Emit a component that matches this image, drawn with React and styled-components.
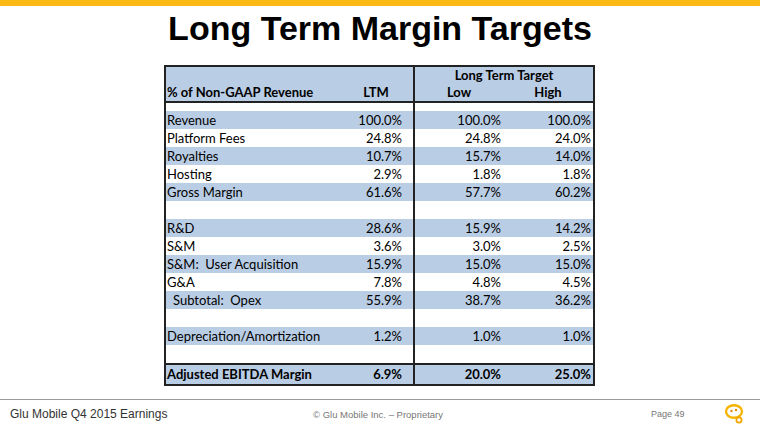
import React from "react";
import styled, { createGlobalStyle } from "styled-components";

const GlobalStyle = createGlobalStyle`
  html, body { margin: 0; padding: 0; background: #fff; }
  body { width: 760px; height: 428px; overflow: hidden; }
  #root { width: 760px; height: 428px; }
`;

const Page = styled.div`
  width: 760px;
  height: 428px;
  display: flex;
  flex-direction: column;
  background: #fff;
`;

const TopBar = styled.div`
  height: 6px;
  background: #fdb913;
  flex: none;
`;

const Title = styled.h1`
  margin: 4px 0 0;
  font-family: "Liberation Sans", Arial, sans-serif;
  font-weight: 700;
  font-size: 34px;
  line-height: 37px;
  text-align: center;
  color: #000;
`;

const Table = styled.div`
  box-sizing: border-box;
  width: 431px;
  margin: 18px 0 0 164px;
  border: 2px solid #222;
  font-family: Lato, "Liberation Sans", sans-serif;
  font-size: 13px;
  color: #000;
`;

const HeaderGrid = styled.div`
  display: grid;
  grid-template-columns: 173px 74px 90px 90px;
  grid-template-rows: 17px 17px;
  background: #b9cde5;
  border-bottom: 2px solid #222;
  font-weight: 700;
`;

const HeadCell = styled.div`
  grid-row: ${(p) => p.$row};
  grid-column: ${(p) => p.$col};
  display: flex;
  align-items: ${(p) => (p.$bottom ? "flex-end" : "center")};
  justify-content: ${(p) => p.$justify || "center"};
  padding-left: ${(p) => p.$pl || 0}px;
  border-left: ${(p) => (p.$divider ? "2px solid #222" : "none")};
  line-height: 17px;
  white-space: pre;
`;

const Row = styled.div`
  display: grid;
  grid-template-columns: 173px 74px 90px 90px;
  height: ${(p) => p.$h || 18}px;
  background: ${(p) => (p.$shade ? "#b9cde5" : "#fff")};
  font-weight: ${(p) => (p.$bold ? 700 : 400)};
  border-top: ${(p) => (p.$topRule ? "2px solid #222" : "none")};
  line-height: ${(p) => p.$h || 18}px;
`;

const Label = styled.div`
  padding-left: ${(p) => (p.$indent ? 7 : 1)}px;
  white-space: pre;
`;

const Value = styled.div`
  box-sizing: border-box;
  text-align: right;
  padding-right: ${(p) => p.$pr}px;
  border-left: ${(p) => (p.$divider ? "2px solid #222" : "none")};
`;

const Footer = styled.div`
  margin-top: auto;
  height: 28px;
  border-top: 1px solid #9a9a9a;
  display: flex;
  align-items: center;
  padding: 0 14px 0 10px;
  font-family: "Liberation Sans", Arial, sans-serif;
`;

const FooterTitle = styled.div`
  font-size: 12px;
  color: #333;
  width: 303px;
`;

const Copyright = styled.div`
  font-size: 9.5px;
  color: #777;
  width: 338px;
`;

const PageNo = styled.div`
  font-size: 9px;
  color: #777;
  flex: 1;
`;

const Logo = () => (
  <svg width="22" height="22" viewBox="0 0 22 22">
    <ellipse cx="10" cy="8.5" rx="8" ry="6.3" fill="none" stroke="#f4b400" strokeWidth="2.4" />
    <circle cx="7.5" cy="8" r="1.2" fill="#e08a00" />
    <circle cx="12" cy="7" r="1.2" fill="#e08a00" />
    <circle cx="15" cy="17" r="2.6" fill="none" stroke="#f0a800" strokeWidth="1.8" />
  </svg>
);

const rows = [
  { label: "Revenue", v: ["100.0%", "100.0%", "100.0%"], shade: true },
  { label: "Platform Fees", v: ["24.8%", "24.8%", "24.0%"] },
  { label: "Royalties", v: ["10.7%", "15.7%", "14.0%"], shade: true },
  { label: "Hosting", v: ["2.9%", "1.8%", "1.8%"] },
  { label: "Gross Margin", v: ["61.6%", "57.7%", "60.2%"], shade: true },
  { blank: true },
  { label: "R&D", v: ["28.6%", "15.9%", "14.2%"], shade: true },
  { label: "S&M", v: ["3.6%", "3.0%", "2.5%"] },
  { label: "S&M:  User Acquisition", v: ["15.9%", "15.0%", "15.0%"], shade: true },
  { label: "G&A", v: ["7.8%", "4.8%", "4.5%"] },
  { label: "Subtotal:  Opex", v: ["55.9%", "38.7%", "36.2%"], shade: true, indent: true },
  { blank: true },
  { label: "Depreciation/Amortization", v: ["1.2%", "1.0%", "1.0%"], shade: true },
  { blank: true },
  { label: "Adjusted EBITDA Margin", v: ["6.9%", "20.0%", "25.0%"], shade: true, bold: true, topRule: true, h: 19 },
];

const DataRow = ({ r }) => (
  <Row $shade={r.shade} $bold={r.bold} $topRule={r.topRule} $h={r.h}>
    <Label $indent={r.indent}>{r.label || ""}</Label>
    <Value $pr={11}>{r.v ? r.v[0] : ""}</Value>
    <Value $pr={2} $divider>{r.v ? r.v[1] : ""}</Value>
    <Value $pr={2}>{r.v ? r.v[2] : ""}</Value>
  </Row>
);

export default function App() {
  return (
    <Page>
      <GlobalStyle />
      <TopBar />
      <Title>Long Term Margin Targets</Title>
      <Table>
        <HeaderGrid>
          <HeadCell $row="1 / 3" $col="1" $bottom $justify="flex-start" $pl={1}>
            % of Non-GAAP Revenue
          </HeadCell>
          <HeadCell $row="1 / 3" $col="2" $bottom>LTM</HeadCell>
          <HeadCell $row="1" $col="3 / 5" $divider>Long Term Target</HeadCell>
          <HeadCell $row="2" $col="3" $divider>Low</HeadCell>
          <HeadCell $row="2" $col="4">High</HeadCell>
        </HeaderGrid>
        <Row $h={8}>
          <Label />
          <Value $pr={0} />
          <Value $pr={0} $divider />
          <Value $pr={0} />
        </Row>
        {rows.map((r, i) => (
          <DataRow key={i} r={r} />
        ))}
      </Table>
      <Footer>
        <FooterTitle>Glu Mobile Q4 2015 Earnings</FooterTitle>
        <Copyright>© Glu Mobile Inc. – Proprietary</Copyright>
        <PageNo>Page 49</PageNo>
        <Logo />
      </Footer>
    </Page>
  );
}
